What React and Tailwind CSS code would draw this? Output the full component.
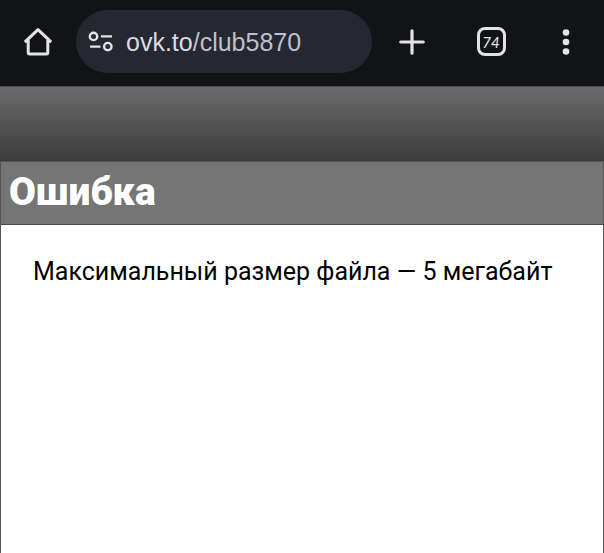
import React from "react";

const HomeIcon = () => (
  <svg width="30" height="30" viewBox="0 0 30 30" fill="none" aria-hidden="true">
    <path
      d="M1.8 15.2 L15 2.6 L28.2 15.2 M5.2 13 V25.6 Q5.2 27 6.6 27 H23.4 Q24.8 27 24.8 25.6 V13"
      stroke="#e3e2e8"
      strokeWidth="3"
      strokeLinejoin="round"
    />
  </svg>
);

const SiteSettingsIcon = () => (
  <svg
    width="26"
    height="24"
    viewBox="0 0 26 24"
    fill="none"
    stroke="#e3e2e8"
    strokeWidth="2.4"
    aria-hidden="true"
  >
    <circle cx="5.5" cy="6.4" r="3.7" />
    <path d="M13 6.4H24M2 16.6H12.5" />
    <circle cx="19.8" cy="16.6" r="3.7" />
  </svg>
);

const PlusIcon = () => (
  <svg width="28" height="28" viewBox="0 0 28 28" fill="none" aria-hidden="true">
    <path
      d="M14 2.8V25.2M2.8 14H25.2"
      stroke="#e3e2e8"
      strokeWidth="3.2"
      strokeLinecap="round"
    />
  </svg>
);

const MenuIcon = () => (
  <svg width="28" height="28" viewBox="0 0 28 28" fill="#e3e2e8" aria-hidden="true">
    <circle cx="13" cy="4.5" r="3.3" />
    <circle cx="13" cy="14" r="3.3" />
    <circle cx="13" cy="23.5" r="3.3" />
  </svg>
);

const BrowserBar = () => (
  <header className="flex h-[86px] items-center bg-[#121317] pb-[3px]">
    <button
      type="button"
      aria-label="Главная"
      className="flex w-[76px] items-center justify-center"
    >
      <HomeIcon />
    </button>
    <button
      type="button"
      className="flex h-[63px] flex-1 items-center gap-3 rounded-full bg-[#252831] pl-3 font-['Liberation_Sans',sans-serif] text-[25px] leading-8 text-[#dcdbe2]"
    >
      <SiteSettingsIcon />
      <span>
        ovk.to<span className="text-[#bfc0cb]">/club5870</span>
      </span>
    </button>
    <button
      type="button"
      aria-label="Новая вкладка"
      className="flex w-20 items-center justify-center"
    >
      <PlusIcon />
    </button>
    <button
      type="button"
      aria-label="Вкладки"
      className="flex w-[78px] items-center justify-center"
    >
      <span className="flex size-[29px] items-center justify-center rounded-[8px] border-3 border-[#e3e2e8] font-[Lato,sans-serif] text-[15px] leading-4 font-medium italic text-[#e3e2e8]">
        74
      </span>
    </button>
    <button
      type="button"
      aria-label="Меню"
      className="flex w-[74px] items-center justify-center"
    >
      <MenuIcon />
    </button>
  </header>
);

const ErrorPage = () => (
  <main className="flex flex-1 flex-col font-[Roboto,sans-serif]">
    <div className="h-[75px] border-t border-[#4d4d4d] bg-linear-to-b from-[#6c6c6c] to-[#3c3c3c]"></div>
    <section className="flex flex-1 flex-col border-x border-t border-[#555555]">
      <h1 className="border-b border-[#4a4a4a] bg-[#757575] px-2 pt-2 pb-[10px] text-[39px] leading-11 font-black text-white">
        Ошибка
      </h1>
      <p className="px-8 py-[31px] text-[25px] leading-8 text-black">
        Максимальный размер файла — 5 мегабайт
      </p>
    </section>
  </main>
);

const App = () => (
  <div className="flex min-h-screen flex-col bg-white">
    <BrowserBar />
    <ErrorPage />
  </div>
);

export default App;
